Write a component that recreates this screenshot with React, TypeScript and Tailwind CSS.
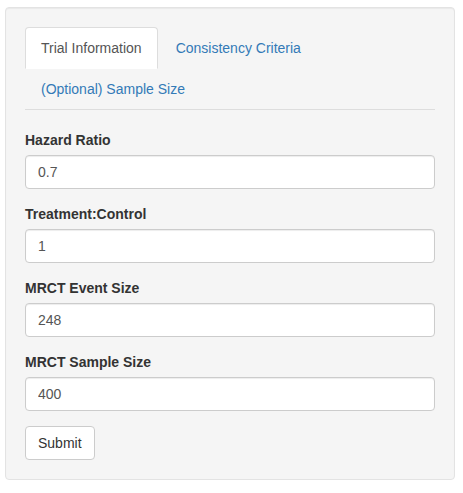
const fields = [
	{ label: "Hazard Ratio", value: "0.7" },
	{ label: "Treatment:Control", value: "1" },
	{ label: "MRCT Event Size", value: "248" },
	{ label: "MRCT Sample Size", value: "400" },
]

export default function App() {
	return (
		<div className="bg-white pl-[5px] pt-[7px] text-[14px] leading-[20px] text-[#333]" style={{ fontFamily: '"Liberation Sans", Arial, sans-serif' }}>
			<div className="w-[450px] rounded-[4px] border border-[#e3e3e3] bg-[#f5f5f5] p-[19px] shadow-[inset_0_1px_1px_rgba(0,0,0,0.05)]">
				<ul className="flex flex-wrap border-b border-[#ddd]">
					<li className="-mb-px">
						<a className="mr-[2px] block rounded-t-[4px] border border-[#ddd] border-b-transparent bg-white px-[15px] py-[10px] text-[#555]">
							Trial Information
						</a>
					</li>
					<li className="-mb-px">
						<a className="mr-[2px] block rounded-t-[4px] border border-transparent px-[15px] py-[10px] text-[#337ab7]">
							Consistency Criteria
						</a>
					</li>
					<li className="-mb-px">
						<a className="mr-[2px] block rounded-t-[4px] border border-transparent px-[15px] py-[10px] text-[#337ab7]">
							(Optional) Sample Size
						</a>
					</li>
				</ul>
				<div className="pt-[20px]">
					{fields.map((f) => (
						<div key={f.label} className="mb-[15px]">
							<label className="mb-[5px] block font-bold">{f.label}</label>
							<input
								defaultValue={f.value}
								className="block h-[34px] w-full rounded-[4px] border border-[#ccc] bg-white px-[12px] py-[6px] text-[#555] shadow-[inset_0_1px_1px_rgba(0,0,0,0.075)] outline-none"
							/>
						</div>
					))}
					<button className="h-[34px] rounded-[4px] border border-[#ccc] bg-white px-[12px] py-[6px] text-[#333]">
						Submit
					</button>
				</div>
			</div>
		</div>
	)
}
